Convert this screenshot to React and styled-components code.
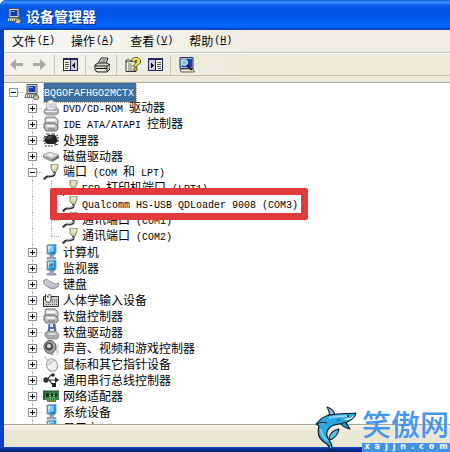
import React from "react";
import styled, { createGlobalStyle } from "styled-components";

const GlobalStyle = createGlobalStyle`
  * {
    box-sizing: border-box;
  }

  body {
    margin: 0;
    overflow: hidden;
    background: #ffffff;
    color: #000000;
    font: 12px/16px "Noto Sans CJK SC", sans-serif;
  }

  button {
    margin: 0;
    padding: 0;
    border: 0;
    background: none;
    color: inherit;
    font: inherit;
  }

  svg {
    display: block;
  }
`;

const Window = styled.div`
  position: relative;
  display: flex;
  flex-direction: column;
  height: 100vh;
  overflow: hidden;
  border-radius: 6px 0 0 0;
  background: #0a3fc4;
`;

const TitleBar = styled.header`
  display: flex;
  align-items: center;
  gap: 4px;
  flex: none;
  height: 30px;
  padding: 2px 6px 0;
  background: linear-gradient(
    #0a5ad8 0,
    #3d95ff 2px,
    #0a60e8 5px,
    #0054e3 9px,
    #0055ea 16px,
    #0066ff 25px,
    #005bf0 27px,
    #0a3fae 30px
  );
`;

const Title = styled.h1`
  margin: 0;
  color: #ffffff;
  font-size: 14px;
  line-height: 20px;
  font-weight: 700;
  text-shadow: 1px 1px 0 #0a2a80;
`;

const Content = styled.div`
  display: flex;
  flex: 1;
  flex-direction: column;
  min-height: 0;
  border: solid #0c3fc8;
  border-width: 0 0 0 4px;
  background: #ece9d8;
`;

const MenuBar = styled.nav`
  display: flex;
  align-items: center;
  flex: none;
  height: 23px;
  border-bottom: 1px solid #cbc7b8;
  background: linear-gradient(90deg, #f7f7f5, #efede2 60%, #efede2);
`;

const MenuButton = styled.button`
  display: flex;
  gap: 1px;
  padding: 0 8px;
`;

const Toolbar = styled.div`
  display: flex;
  align-items: center;
  flex: none;
  height: 23px;
  padding-left: 1px;
  border-top: 1px solid #ffffff;
  border-bottom: 1px solid #c5c1b0;
  background: linear-gradient(90deg, #f3f2ec, #ece9d8 60%, #ece9d8);
`;

const ToolButton = styled.button`
  display: flex;
  align-items: center;
  justify-content: center;
  width: 23px;
  height: 20px;
`;

const Separator = styled.span`
  width: 1px;
  height: 20px;
  margin: 0 4px 0 3px;
  background: #c9c5b5;
`;

const TreePane = styled.main`
  flex: 1;
  min-height: 0;
  margin-top: 6px;
  overflow: hidden;
  border-top: 1px solid #aca899;
  background: #ffffff;
`;

const Tree = styled.ul`
  margin: 0;
  padding: 1px 0 0;
  list-style: none;
`;

const Row = styled.li`
  position: relative;
  display: flex;
  align-items: center;
  height: 16px;
  white-space: nowrap;
`;

const Guide = styled.span`
  position: relative;
  display: flex;
  align-items: center;
  justify-content: center;
  flex: none;
  width: 19px;
  height: 16px;

  &::before {
    content: "";
    position: absolute;
    top: 0;
    left: 9px;
    height: ${(p) => (p.$end ? "8px" : "16px")};
    border-left: ${(p) => (p.$line ? "1px dotted #b4b4b4" : "0")};
  }

  &::after {
    content: "";
    position: absolute;
    top: 8px;
    left: 9px;
    right: 0;
    border-top: ${(p) => (p.$branch ? "1px dotted #b4b4b4" : "0")};
  }
`;

const Expander = styled.button`
  position: relative;
  z-index: 1;
  display: block;
  width: 9px;
  height: 9px;
  border: 1px solid #8c94a0;
  background: #ffffff;
`;

const IconSlot = styled.span`
  flex: none;
  width: 16px;
  height: 16px;
  margin: 0 4px 0 1px;
`;

const Label = styled.span`
  line-height: 16px;
  padding-right: 2px;
  background: ${(p) => (p.$selected ? "#3f6f9f" : "transparent")};
  color: ${(p) => (p.$selected ? "#ffffff" : "#000000")};
  outline: ${(p) => (p.$selected ? "1px dotted #b5a078" : "none")};
`;

const Latin = styled.span`
  font-family: "Liberation Mono", monospace;
  font-size: 10px;
  white-space: pre;
`;

const Marker = styled.span`
  position: absolute;
  z-index: 2;
  top: -8px;
  bottom: -8px;
  left: 46px;
  width: 258px;
  border: 7px solid #e23a3c;
  border-radius: 2px;
  pointer-events: none;
`;

const StatusBar = styled.footer`
  flex: none;
  height: 23px;
  border-top: 1px solid #aca899;
  background: linear-gradient(#f4f2e8, #ece9d8 6px, #e8e4d0);
`;

const BottomEdge = styled.div`
  flex: none;
  height: 5px;
  background: linear-gradient(#1a50c8, #0a2f96 2px, #06206c);
`;

const Brand = styled.a`
  position: absolute;
  z-index: 3;
  right: 0;
  bottom: 0;
  display: flex;
  align-items: flex-end;
  gap: 4px;
  color: #4596ee;
  text-decoration: none;
`;

const BrandText = styled.span`
  display: flex;
  flex-direction: column;
  width: 88px;
`;

const BrandName = styled.span`
  font-size: 29px;
  line-height: 40px;
  font-weight: 500;
  white-space: nowrap;
`;

const BrandSite = styled.span`
  display: flex;
  justify-content: space-around;
  height: 9px;
  background: #3f93ee;
  color: #ffffff;
  font: 700 8px/8px "DejaVu Sans", sans-serif;
`;

function Text({ children }) {
  return children
    .split(/([\x20-\x7e]+)/)
    .filter(Boolean)
    .map((part, i) =>
      /^[\x20-\x7e]/.test(part) ? <Latin key={i}>{part}</Latin> : part
    );
}

function Svg({ size = 16, children }) {
  return (
    <svg width={size} height={size} viewBox="0 0 16 16" aria-hidden="true">
      {children}
    </svg>
  );
}

const ports = (
  <>
    <path d="M8 0h7v4l-2 4h-3L8 5z" fill="#d6cfa6" stroke="#7a7558" strokeWidth=".8" />
    <path d="M9 2h5M9 4h4" stroke="#fffce0" />
    <path d="M11.500 8v2c0 3-4 1.500-7 2.500-2 .5-2 2-4 2.500" fill="none" stroke="#343434" strokeWidth="2.200" />
    <path d="M11 9v1c-1 2-4 1-6 2" fill="none" stroke="#c5c5c5" />
  </>
);

const controller = (
  <>
    <path d="M3 1h9l3 3v4l-2 2H4L2 7V3z" fill="#d2d2d2" stroke="#777" />
    <path d="M4 3h8l1 2H3z" fill="#f5f5f5" />
    <path d="M2 7h10l3 3v3l-2 2H3l-2-3V8z" fill="#b9bcbc" stroke="#636666" />
    <path d="M3 9h8l1 2H4z" fill="#ededed" />
    <path d="M5 13h7" stroke="#777" />
  </>
);

const monitor = (
  <>
    <path d="M4 1l9-1v9l-2 2-7-1z" fill="#2584cf" stroke="#8aa3b9" />
    <path d="M5 2l6-.5v6L5 9z" fill="#6dcafa" />
    <path d="M5 2l4-.3L5 7z" fill="#c0edff" />
    <path d="M7 11h3v2l3 1v1H4v-1l3-1z" fill="#a7adc4" stroke="#71778f" strokeWidth=".7" />
  </>
);

const icons = {
  root: (
    <>
      <path d="M3 .5h10v9H3z" fill="#d8d8d4" stroke="#555" />
      <path d="M4.500 2h7v6h-7z" fill="#173aaa" />
      <path d="M5 3h4v1H5z" fill="#6fa6f2" />
      <path d="M2 10h10l2 3.500H1z" fill="#e9e6dc" stroke="#444" strokeWidth=".8" />
      <path d="M3 11.500h7M3 12.500h9" stroke="#777" strokeDasharray="1 1" />
      <path d="M11 11h3l1 3-2 1.500h-3L9 14z" fill="#c5c1ae" stroke="#444" strokeWidth=".7" />
    </>
  ),
  disc: (
    <>
      <path d="M1 10l4-3h8l3 3v3l-3 2H4l-3-2z" fill="#aeb1b4" stroke="#808386" strokeWidth=".7" />
      <path d="M2 11h12v1H2z" fill="#eee" />
      <ellipse cx="8" cy="5.5" rx="5" ry="5" fill="#e2e2ec" stroke="#aeafb8" strokeWidth=".8" />
      <path d="M8 5.5L5 1.6A5 5 0 0 1 9 .6z" fill="#fff6cb" />
      <path d="M8 5.5l4.700-1.200c.4 1.800 0 3-1 4.300z" fill="#c7d8f8" />
      <circle cx="8" cy="5.5" r="1.4" fill="#fff" stroke="#999" strokeWidth=".7" />
    </>
  ),
  controller,
  cpu: (
    <>
      <path d="M4 3V1m2 2V1m3 2V1m2 2V1M3 13v2m3-2v2m3-2v2m3-3v2M0 6h3M0 9h3m10-3h3m-3 3h3M1 12l3-2m8 2l3 1M1 4l3 1m8 0l3-2" stroke="#343434" />
      <path d="M5 3h7l3 6-3 3H4L1 8z" fill="#222" />
      <path d="M5 4l5 0-2 3-4 0z" fill="#4d4d4d" />
    </>
  ),
  disk: (
    <>
      <path d="M0 7l6-3 10 3-7 4z" fill="#dadada" stroke="#929292" strokeWidth=".7" />
      <path d="M0 7l9 4v3L0 10z" fill="#9a9c9d" />
      <path d="M9 11l7-4v3l-7 4z" fill="#696c6d" />
      <path d="M4 7l3-1 4 1-3 1z" fill="#fff" />
      <path d="M11 10h1v1h-1z" fill="#7ddb70" />
    </>
  ),
  ports,
  computer: monitor,
  display: (
    <>
      {monitor}
      <path d="M7 3v5M9 3v5M6 5h5" stroke="#246796" strokeWidth=".8" />
    </>
  ),
  keyboard: (
    <>
      <path d="M0 5l3-2 9 5 4-1v3l-5 3-5-1-5-4z" fill="#b6b9c4" stroke="#757986" strokeWidth=".7" />
      <path d="M2 5l8 5 4-1M2 7l7 4M4 4l7 5" stroke="#eef0f6" strokeDasharray="1 1" fill="none" />
    </>
  ),
  hid: (
    <>
      <path d="M.5 4.500h15v10H.5z" fill="#d1d1c9" stroke="#333" />
      <path d="M9 8h6M9 10h6M3 12.500h12" stroke="#555" strokeDasharray="1 1" />
      <path d="M2.500 2v6c0 3 5.500 3 5.500 0V4c0-2-3-2-3 0v2" fill="#fff" stroke="#333" />
    </>
  ),
  floppy: (
    <>
      <path d="M6 0h6l1 7H5z" fill="#5368a8" stroke="#3c4a7c" strokeWidth=".6" />
      <path d="M7 0h3v3H7z" fill="#dce2f5" />
      <path d="M7 5h4v3H7z" fill="#fff" />
      <path d="M2 9l3-2h8l3 4v2l-2 2H5l-3-3z" fill="#a9acaf" stroke="#777" strokeWidth=".7" />
      <path d="M4 9h8l2 2H6z" fill="#d9dcde" />
    </>
  ),
  sound: (
    <>
      <path d="M12 5c2 2 3 5 1 8M14 4c3 3 3 7 0 11" fill="none" stroke="#b5bac8" />
      <ellipse cx="7" cy="7" rx="6" ry="6.5" fill="#a1a4a6" stroke="#55585a" />
      <circle cx="6" cy="6.5" r="4" fill="#4c5052" />
      <circle cx="6" cy="6" r="2" fill="#d8dadd" />
      <path d="M5 13l7 1-3 1z" fill="#83868b" />
    </>
  ),
  mouse: (
    <>
      <path d="M1 1c4 0 2 4 5 4" fill="none" stroke="#a5a5a5" />
      <ellipse cx="9" cy="9" rx="5.500" ry="6.4" fill="#eeeeea" stroke="#9b9b98" transform="rotate(-24 9 9)" />
      <path d="M3 8c4 1 6-1 8-4M6 4l2 3" fill="none" stroke="#aaa" />
      <path d="M6 10c1 3 3 3 5 2" fill="none" stroke="#fff" />
    </>
  ),
  usb: (
    <>
      <path d="M2 8h11M4 8l4-5h3M6 8l4 5h2" fill="none" stroke="#222" strokeWidth="1.2" />
      <circle cx="3" cy="8" r="2.7" fill="#333" />
      <path d="M12 5l4 3-4 3z" fill="#222" />
      <circle cx="10" cy="3" r="1.7" fill="#222" />
      <path d="M9 11h4v4H9z" fill="#222" />
    </>
  ),
  network: (
    <>
      <path d="M0 3h16v9h-3v2H4v-2H0z" fill="#308344" />
      <path d="M0 3h16M1 3v9" stroke="#1d4f2b" />
      <path d="M3 5h3v4H3zM8 5h2v3H8zM12 5h2v4h-2z" fill="#17331f" />
      <path d="M3 11h10M7 5v5M11 5v6" stroke="#8dd090" strokeDasharray="1 1" />
      <path d="M5 13h8" stroke="#d1bd58" strokeDasharray="1 1" />
    </>
  ),
};

const devices = [
  { text: "DVD/CD-ROM 驱动器", icon: "disc" },
  { text: "IDE ATA/ATAPI 控制器", icon: "controller" },
  { text: "处理器", icon: "cpu" },
  { text: "磁盘驱动器", icon: "disk" },
  {
    text: "端口 (COM 和 LPT)",
    icon: "ports",
    items: [
      { text: "ECP 打印机端口 (LPT1)" },
      { text: "Qualcomm HS-USB QDLoader 9008 (COM3)", marked: true },
      { text: "通讯端口 (COM1)" },
      { text: "通讯端口 (COM2)" },
    ],
  },
  { text: "计算机", icon: "computer" },
  { text: "监视器", icon: "display" },
  { text: "键盘", icon: "keyboard" },
  { text: "人体学输入设备", icon: "hid" },
  { text: "软盘控制器", icon: "controller" },
  { text: "软盘驱动器", icon: "floppy" },
  { text: "声音、视频和游戏控制器", icon: "sound" },
  { text: "鼠标和其它指针设备", icon: "mouse" },
  { text: "通用串行总线控制器", icon: "usb" },
  { text: "网络适配器", icon: "network" },
  { text: "系统设备", icon: "computer" },
  { text: "显示卡", icon: "display" },
];

const menus = [
  ["文件", "F"],
  ["操作", "A"],
  ["查看", "V"],
  ["帮助", "H"],
];

function Toggle({ open, name }) {
  return (
    <Expander aria-label={name} aria-expanded={Boolean(open)}>
      <svg width="7" height="7" viewBox="0 0 7 7" shapeRendering="crispEdges">
        <path d={open ? "M1 3h5v1H1z" : "M1 3h5v1H1zM3 1h1v5H3z"} />
      </svg>
    </Expander>
  );
}

function Device({ device }) {
  return (
    <>
      <Row>
        <Guide />
        <Guide $line $branch>
          <Toggle open={device.items} name={device.text} />
        </Guide>
        <IconSlot>
          <Svg>{icons[device.icon]}</Svg>
        </IconSlot>
        <Label>
          <Text>{device.text}</Text>
        </Label>
      </Row>
      {device.items?.map((item, i) => (
        <Row key={item.text}>
          <Guide />
          <Guide $line />
          <Guide $line $branch $end={i === device.items.length - 1} />
          <IconSlot>
            <Svg>{ports}</Svg>
          </IconSlot>
          <Label>
            <Text>{item.text}</Text>
          </Label>
          {item.marked && <Marker />}
        </Row>
      ))}
    </>
  );
}

function Pane({ flip }) {
  return (
    <svg width="15" height="13" viewBox="0 0 15 13" shapeRendering="crispEdges" aria-hidden="true">
      <g transform={flip ? "translate(15 0) scale(-1 1)" : undefined}>
        <path d="M0 0h15v13H0z" fill="#25255e" />
        <path d="M1 2h6v10H1z" fill="#f8f8f2" />
        <path d="M2 4h4v1H2zM2 6h4v1H2zM2 8h4v1H2zM2 10h3v1H2z" fill="#555" />
        <path d="M8 2h6v10H8z" fill="#cccbe0" />
        <path d="M12 4v7L9 7.500z" fill="#111" />
      </g>
    </svg>
  );
}

function Arrow({ flip }) {
  return (
    <svg width="13" height="11" viewBox="0 0 13 11" aria-hidden="true">
      <path
        d="M0 5.500L6 0v4h7v3H6v4z"
        fill="#aaa99f"
        transform={flip ? "translate(13 0) scale(-1 1)" : undefined}
      />
    </svg>
  );
}

function Tools() {
  return (
    <Toolbar role="toolbar">
      <ToolButton aria-label="后退">
        <Arrow />
      </ToolButton>
      <ToolButton aria-label="前进">
        <Arrow flip />
      </ToolButton>
      <Separator />
      <ToolButton aria-label="显示/隐藏控制台树">
        <Pane />
      </ToolButton>
      <Separator />
      <ToolButton aria-label="打印">
        <Svg>
          <path d="M4 7l3-6h7l-2 6" fill="#fff" stroke="#222" />
          <path d="M7.500 3h5M6.500 5h5" stroke="#444" />
          <path d="M1 8l3-2h9l3 2v4l-3 3H3l-2-2z" fill="#d5d3c4" stroke="#222" />
          <path d="M1 9h12l3-2M2 11.500h11M13 9v5" fill="none" stroke="#222" />
          <path d="M3 13h8" stroke="#fff" />
          <path d="M10 10h2v1h-2z" fill="#d2c12e" />
        </Svg>
      </ToolButton>
      <Separator />
      <ToolButton aria-label="帮助">
        <Svg>
          <path d="M1 4.500h10v10H1z" fill="#fffef0" stroke="#333" />
          <path d="M3 7h4M3 9h6M3 11h4M3 13h6" stroke="#6a6a65" />
          <path d="M0 4l3-2 4 2-4 1z" fill="#bfbda2" stroke="#444" strokeWidth=".7" />
          <path d="M7 4V2l2-1.500h4L15.500 3v3L12 8.500V10H9V7.500l3-2.500V3.500H10V5H7z" fill="#f2df4c" stroke="#4c4922" strokeWidth=".8" />
          <path d="M9 11h3v2.500H9z" fill="#f2df4c" stroke="#4c4922" strokeWidth=".8" />
        </Svg>
      </ToolButton>
      <ToolButton aria-label="显示/隐藏操作窗格">
        <Pane flip />
      </ToolButton>
      <Separator />
      <ToolButton aria-label="扫描检测硬件改动">
        <Svg>
          <path d="M1 .5h13v11H1z" fill="#9fb4d6" stroke="#323262" />
          <path d="M3 2h10v8H3z" fill="#1842a8" />
          <path d="M1 12h13l1.500 3H2z" fill="#eeeacb" stroke="#454545" strokeWidth=".8" />
          <path d="M7 7l6 6" stroke="#151542" strokeWidth="2" />
          <circle cx="5.500" cy="5.500" r="3" fill="#7dc4e2" stroke="#e5f7fa" />
        </Svg>
      </ToolButton>
    </Toolbar>
  );
}

function Shark() {
  return (
    <svg width="43" height="46" viewBox="0 0 43 46" aria-hidden="true">
      <g stroke="#101820" strokeWidth="1.1" strokeLinejoin="round">
        <path d="M14 9C15 6 13 3 12 1c4 1 7 4 8 8z" fill="#77c6ee" />
        <path d="M24 16l6-2c1 3 3 6 5 9-5-1-8-3-11-7z" fill="#229bd5" />
        <path
          d="M1 18c4-5 8-8 14-9 10-2 19-1 26-2-1 5-4 7-9 9-6 2-13 2-17 5-4 4-4 9-1 13s4 8 2 11c-1-2-2-5-4-7C4 34 2 27 4 20z"
          fill="#29a9e1"
        />
        <path d="M14 32c1-5 5-8 10-9-1 5-4 9-9 11z" fill="#58bde9" />
      </g>
      <path d="M28 13c4 0 8-1 11-4-1 4-6 6-11 4z" fill="#fff" />
      <path d="M14 12c6-2 12-2 19-2" fill="none" stroke="#91d9f6" strokeWidth="2" />
      <path d="M2 18c3-2 7-2 10-1" fill="none" stroke="#101820" />
      <path d="M6 23c0 5 3 9 7 12" fill="none" stroke="#6fcdf3" strokeWidth="2" />
      <circle cx="33" cy="10" r="1" fill="#102030" />
      <path d="M22 13l1 3m1-4l1 3" stroke="#156089" />
    </svg>
  );
}

function App() {
  return (
    <>
      <GlobalStyle />
      <Window>
        <TitleBar>
          <Svg>{icons.root}</Svg>
          <Title>设备管理器</Title>
        </TitleBar>
        <Content>
          <MenuBar>
            {menus.map(([name, key]) => (
              <MenuButton key={key}>
                {name}
                <Latin>
                  (<u>{key}</u>)
                </Latin>
              </MenuButton>
            ))}
          </MenuBar>
          <Tools />
          <TreePane>
            <Tree>
              <Row>
                <Guide $branch>
                  <Toggle open name="BQGOFAFHGO2MCTX" />
                </Guide>
                <IconSlot>
                  <Svg>{icons.root}</Svg>
                </IconSlot>
                <Label $selected>
                  <Text>BQGOFAFHGO2MCTX</Text>
                </Label>
              </Row>
              {devices.map((device) => (
                <Device key={device.text} device={device} />
              ))}
            </Tree>
          </TreePane>
          <StatusBar />
        </Content>
        <BottomEdge />
        <Brand href="#">
          <Shark />
          <BrandText>
            <BrandName>笑傲网</BrandName>
            <BrandSite>
              {[..."xajjn.com"].map((letter, i) => (
                <span key={i}>{letter}</span>
              ))}
            </BrandSite>
          </BrandText>
        </Brand>
      </Window>
    </>
  );
}

export default App;
